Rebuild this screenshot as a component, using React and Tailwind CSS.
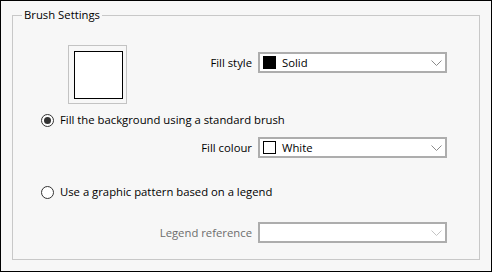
import React from 'react';

const Chevron = ({ disabled }) => (
    <svg width="11" height="6" viewBox="0 0 11 6" className="shrink-0">
        <path d="M0.5 0.5 L5.5 5.5 L10.5 0.5" fill="none" stroke={disabled ? '#c4c4c4' : '#8a8a8a'} strokeWidth="1" />
    </svg>
);

const ComboBox = ({ swatch, label, disabled }) => (
    <div className="w-[189px] h-[21px] border-2 border-[#adadad] bg-white flex items-center pl-[3px] pr-[3px]">
        {swatch && (
            <span className={`w-[13px] h-[13px] border border-black shrink-0 ${swatch === 'black' ? 'bg-black' : 'bg-white'}`} />
        )}
        <span className="ml-[6px] flex-1 text-black leading-none">{label}</span>
        <Chevron disabled={disabled} />
    </div>
);

const FieldRow = ({ label, children, disabled, className = '' }) => (
    <div className={`flex items-center justify-end gap-[6px] mr-[32px] ${className}`}>
        <span className={disabled ? 'text-[#6d6d6d]' : 'text-black'}>{label}</span>
        {children}
    </div>
);

const Radio = ({ checked, label, className = '' }) => (
    <label className={`flex items-center gap-[6px] ml-[28px] h-[16px] ${className}`}>
        <span className="w-[13px] h-[13px] rounded-full border border-[#333] bg-white flex items-center justify-center shrink-0">
            {checked && <span className="w-[7px] h-[7px] rounded-full bg-[#333]" />}
        </span>
        <span>{label}</span>
    </label>
);

export default function App() {
    return (
        <div
            className="w-[492px] h-[272px] border border-black bg-[#f7f7f7] text-[11.3px] leading-[16px] text-black overflow-hidden"
            style={{ fontFamily: '"Open Sans", "Noto Sans", sans-serif' }}
        >
            <fieldset className="ml-[11px] mt-[6px] w-[468px] h-[253px] border border-[#c8c8c8] p-0">
                <legend className="ml-[9px] px-[2px]">Brush Settings</legend>

                {/* preview + fill style */}
                <div className="flex items-start mt-[22px]">
                    <div className="ml-[55px] w-[59px] h-[59px] border border-[#c3c3c3] p-[5px] shrink-0">
                        <div className="w-[49px] h-[48px] border border-black bg-white" />
                    </div>
                    <FieldRow label="Fill style" className="flex-1 mt-[7px]">
                        <ComboBox swatch="black" label="Solid" />
                    </FieldRow>
                </div>

                <Radio checked label="Fill the background using a standard brush" className="mt-[8px]" />

                <FieldRow label="Fill colour" className="mt-[9px]">
                    <ComboBox swatch="white" label="White" />
                </FieldRow>

                <Radio label="Use a graphic pattern based on a legend" className="mt-[26px]" />

                <FieldRow label="Legend reference" disabled className="mt-[22px]">
                    <ComboBox label="" disabled />
                </FieldRow>
            </fieldset>
        </div>
    );
}
